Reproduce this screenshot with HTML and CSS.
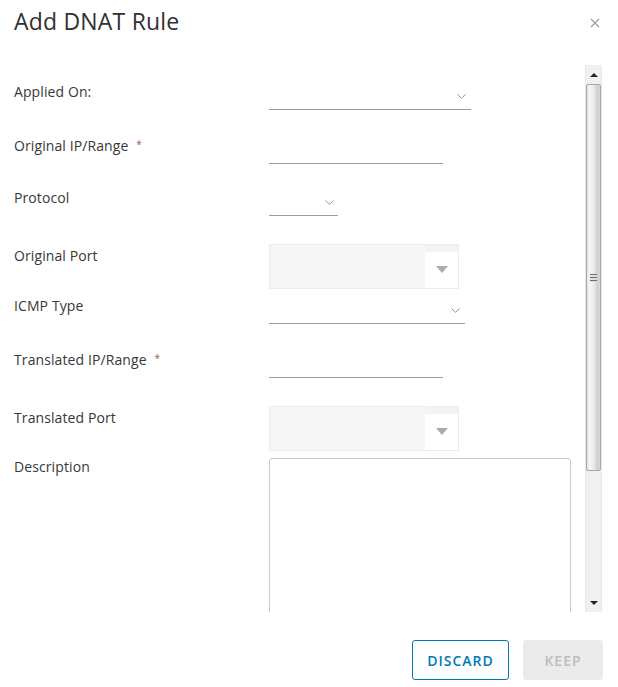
FILE: index.html
```html
<!DOCTYPE html>
<html lang="en">
<head>
<meta charset="utf-8">
<title>Add DNAT Rule</title>
<link rel="stylesheet" href="styles.css">
</head>
<body>
<div class="dialog">
  <header class="dialog-header">
    <h1 class="dialog-title">Add DNAT Rule</h1>
    <button class="close" type="button" aria-label="Close">
      <svg width="10" height="10" viewBox="0 0 10 10"><path d="M1 1L9 9M9 1L1 9" stroke="#9a9a9a" stroke-width="1.1" fill="none"/></svg>
    </button>
  </header>
  <div class="dialog-body">
    <form class="form">
      <div class="row">
        <label class="label">Applied On:</label>
        <div class="select w-applied"><svg class="chev" width="9" height="5" viewBox="0 0 9 5"><path d="M0.5 0.5L4.5 4.3L8.5 0.5" stroke="#8d96a0" stroke-width="1" fill="none"/></svg></div>
      </div>
      <div class="row">
        <label class="label">Original IP/Range <span class="req">*</span></label>
        <div class="input w-ip"></div>
      </div>
      <div class="row row--close">
        <label class="label">Protocol</label>
        <div class="select w-protocol"><svg class="chev" width="9" height="5" viewBox="0 0 9 5"><path d="M0.5 0.5L4.5 4.3L8.5 0.5" stroke="#8d96a0" stroke-width="1" fill="none"/></svg></div>
      </div>
      <div class="row row--box">
        <label class="label label--box">Original Port</label>
        <div class="combo"><div class="combo-field"></div><div class="combo-toggle"><span class="tri"></span></div></div>
      </div>
      <div class="row row--after-box">
        <label class="label">ICMP Type</label>
        <div class="select w-icmp"><svg class="chev" width="9" height="5" viewBox="0 0 9 5"><path d="M0.5 0.5L4.5 4.3L8.5 0.5" stroke="#8d96a0" stroke-width="1" fill="none"/></svg></div>
      </div>
      <div class="row">
        <label class="label">Translated IP/Range <span class="req">*</span></label>
        <div class="input w-ip"></div>
      </div>
      <div class="row row--box">
        <label class="label label--box">Translated Port</label>
        <div class="combo"><div class="combo-field"></div><div class="combo-toggle"><span class="tri"></span></div></div>
      </div>
      <div class="row row--after-box">
        <label class="label label--area">Description</label>
        <div class="textarea"></div>
      </div>
    </form>
    <div class="scrollbar">
      <div class="sb-btn sb-up"><span class="sb-arrow-up"></span></div>
      <div class="sb-thumb"><span class="grip"></span></div>
      <div class="sb-track"></div>
      <div class="sb-btn sb-down"><span class="sb-arrow-down"></span></div>
    </div>
  </div>
  <footer class="dialog-footer">
    <button class="btn btn-outline" type="button">DISCARD</button>
    <button class="btn btn-disabled" type="button" disabled>KEEP</button>
  </footer>
</div>
</body>
</html>
```

FILE: styles.css
```css
* { box-sizing: border-box; }
html, body { margin: 0; padding: 0; background: #fff; }
body {
  font-family: "Open Sans", "Liberation Sans", sans-serif;
  color: #333;
}
.dialog {
  width: 618px;
  height: 687px;
  display: flex;
  flex-direction: column;
  background: #fff;
  overflow: hidden;
}
.dialog-header {
  height: 65px;
  flex: none;
  display: flex;
  justify-content: space-between;
  align-items: flex-start;
  padding: 0 17px 0 14px;
}
.dialog-title {
  margin: 0;
  padding-top: 6px;
  font-size: 23px;
  line-height: 30px;
  font-weight: 400;
  color: #313131;
  letter-spacing: 0.2px;
}
.close {
  margin-top: 17px;
  padding: 0;
  width: 12px;
  height: 12px;
  border: 0;
  background: none;
  display: flex;
  align-items: center;
  justify-content: center;
}
.dialog-body {
  height: 547px;
  flex: none;
  display: flex;
  overflow: hidden;
}
.form {
  flex: 1;
  padding: 17px 0 0 14px;
  margin: 0;
  overflow: hidden;
}
.row {
  display: grid;
  grid-template-columns: 255px 1fr;
  margin-top: 26px;
}
.row:first-child { margin-top: 0; }
.row--close { margin-top: 24px; }
.row--box { margin-top: 28px; }
.row--after-box { margin-top: 7px; }
.label {
  font-size: 14px;
  line-height: 18px;
  padding-top: 1px;
  color: #383838;
  letter-spacing: 0.1px;
}
.label--box { padding-top: 3px; }
.label--area { padding-top: 0; }
.req {
  color: #a4574a;
  font-size: 10px;
  vertical-align: top;
  margin-left: 4px;
  line-height: 14px;
}
.select, .input {
  height: 28px;
  border-bottom: 1px solid #9c9c9c;
}
.select {
  display: flex;
  justify-content: flex-end;
  align-items: flex-start;
  padding: 12px 5px 0 0;
}
.w-applied { width: 202px; }
.w-ip { width: 174px; }
.w-protocol { width: 69px; padding-right: 4px; }
.w-icmp { width: 196px; }
.chev { display: block; }
.combo {
  width: 190px;
  height: 45px;
  border: 1px solid #ececec;
  display: flex;
}
.combo-field {
  flex: 1;
  background: #f7f7f7;
}
.combo-toggle {
  width: 33px;
  background: #fff;
  border-top: 7px solid #f3f3f3;
  display: flex;
  align-items: center;
  justify-content: center;
}
.tri {
  width: 0;
  height: 0;
  border-left: 6px solid transparent;
  border-right: 6px solid transparent;
  border-top: 7px solid #acacac;
  margin-top: -2px;
}
.textarea {
  width: 302px;
  height: 220px;
  border: 1px solid #c9c9c9;
  border-radius: 3px;
}
.scrollbar {
  width: 17px;
  margin-right: 16px;
  display: flex;
  flex-direction: column;
  background: #f0f0f0;
  border-left: 1px solid #e8e8e8;
  border-right: 1px solid #e8e8e8;
}
.sb-btn {
  flex: none;
  display: flex;
  align-items: center;
  justify-content: center;
}
.sb-up { height: 19px; }
.sb-down { height: 16px; align-items: flex-start; padding-top: 5px; }
.sb-arrow-up {
  width: 0; height: 0;
  border-left: 4px solid transparent;
  border-right: 4px solid transparent;
  border-bottom: 4px solid #222;
}
.sb-arrow-down {
  width: 0; height: 0;
  border-left: 4px solid transparent;
  border-right: 4px solid transparent;
  border-top: 4px solid #222;
}
.sb-thumb {
  flex: none;
  height: 387px;
  border: 1px solid #a8a8a8;
  border-radius: 2px;
  background: linear-gradient(to right, #e4e4e4 0%, #f6f6f6 20%, #e9e9e9 55%, #cfcfcf 80%, #d8d8d8 100%);
  display: flex;
  align-items: center;
  justify-content: center;
}
.grip {
  width: 7px;
  height: 8px;
  background: repeating-linear-gradient(to bottom, #6e6e6e 0 1px, #e0e0e0 1px 3px);
}
.sb-track { flex: 1; }
.dialog-footer {
  flex: 1;
  display: flex;
  justify-content: flex-end;
  align-items: flex-start;
  gap: 14px;
  padding: 28px 15px 0 0;
}
.btn {
  height: 40px;
  border-radius: 3px;
  font-family: "Open Sans", "Liberation Sans", sans-serif;
  font-size: 14px;
  font-weight: 600;
  letter-spacing: 1px;
  padding: 0;
}
.btn-outline {
  width: 97px;
  background: #fff;
  color: #0079b8;
  border: 1px solid #0079b8;
}
.btn-disabled {
  width: 80px;
  background: #ebebeb;
  color: #bdbdbd;
  border: 1px solid #ebebeb;
}
```
